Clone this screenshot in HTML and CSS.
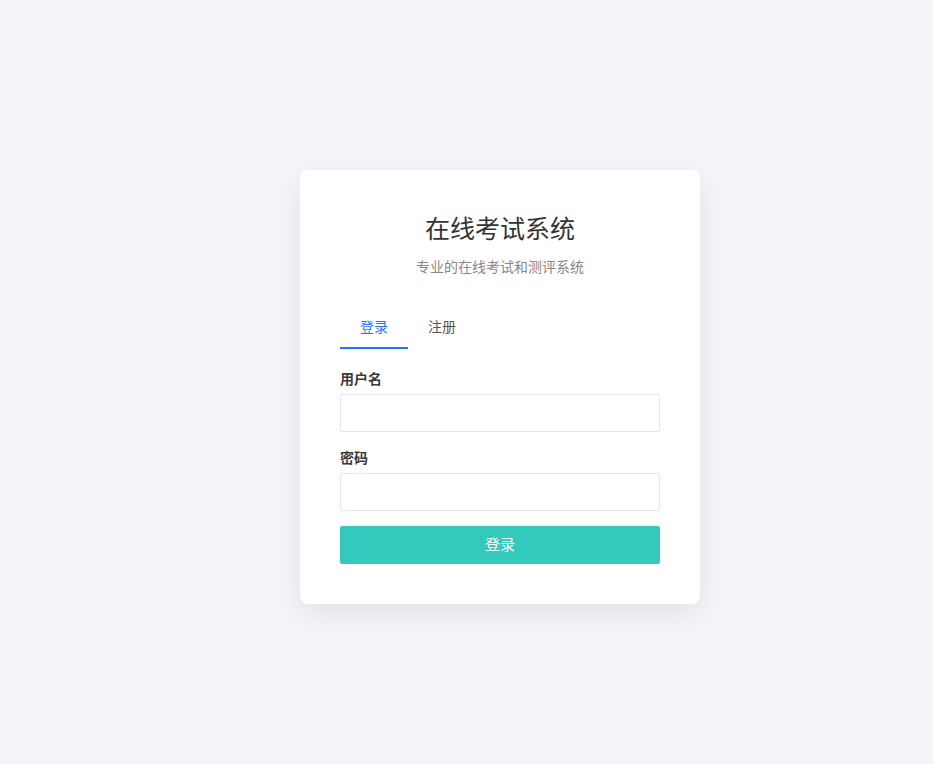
FILE: index.html
```html
<!DOCTYPE html>
<html lang="zh-CN">
<head>
<meta charset="utf-8">
<title>在线考试系统</title>
<link rel="stylesheet" href="styles.css">
</head>
<body>
<div class="page">
  <div class="card">
    <h1 class="title">在线考试系统</h1>
    <p class="subtitle">专业的在线考试和测评系统</p>
    <div class="tabs">
      <div class="tab active">登录</div>
      <div class="tab">注册</div>
    </div>
    <form class="form">
      <div class="group">
        <label class="label">用户名</label>
        <input class="input" type="text">
      </div>
      <div class="group">
        <label class="label">密码</label>
        <input class="input" type="password">
      </div>
      <button class="btn" type="button">登录</button>
    </form>
  </div>
</div>
</body>
</html>
```
FILE: styles.css
```css
* { box-sizing: border-box; }
html, body {
  margin: 0;
  padding: 0;
  background: #f4f5f9;
  font-family: "Liberation Sans", Arial, "Noto Sans CJK SC", sans-serif;
  color: #333;
}
.page {
  padding: 170px 0 0 300px;
  min-height: 764px;
}
.card {
  width: 400px;
  background: #fff;
  border-radius: 8px;
  padding: 40px;
  box-shadow: 0 10px 30px rgba(0, 0, 0, 0.08);
}
.title {
  margin: 0;
  font-size: 25px;
  line-height: 38px;
  font-weight: normal;
  text-align: center;
  color: #333;
}
.subtitle {
  margin: 9px 0 0;
  font-size: 14px;
  line-height: 21px;
  text-align: center;
  color: #888;
}
.tabs {
  display: flex;
  margin-top: 29px;
}
.tab {
  padding: 10px 20px;
  font-size: 14px;
  line-height: 20px;
  color: #555;
  border-bottom: 2px solid transparent;
}
.tab.active {
  color: #1677ff;
  border-bottom-color: #1677ff;
}
.form {
  margin: 20px 0 0;
}
.group {
  display: flex;
  flex-direction: column;
  margin-bottom: 16px;
}
.group + .group {
  margin-bottom: 15px;
}
.label {
  font-size: 14px;
  line-height: 20px;
  font-weight: bold;
  color: #3a3a3a;
  margin-bottom: 5px;
}
.input {
  height: 38px;
  width: 100%;
  border: 1px solid #e6e6e6;
  border-radius: 2px;
  padding: 0 10px;
  font-size: 14px;
  outline: none;
}
.btn {
  display: block;
  width: 100%;
  height: 38px;
  border: none;
  border-radius: 2px;
  background: #33c9bc;
  color: #fff;
  font-size: 15px;
  line-height: 36px;
  font-family: inherit;
  cursor: pointer;
}
```
